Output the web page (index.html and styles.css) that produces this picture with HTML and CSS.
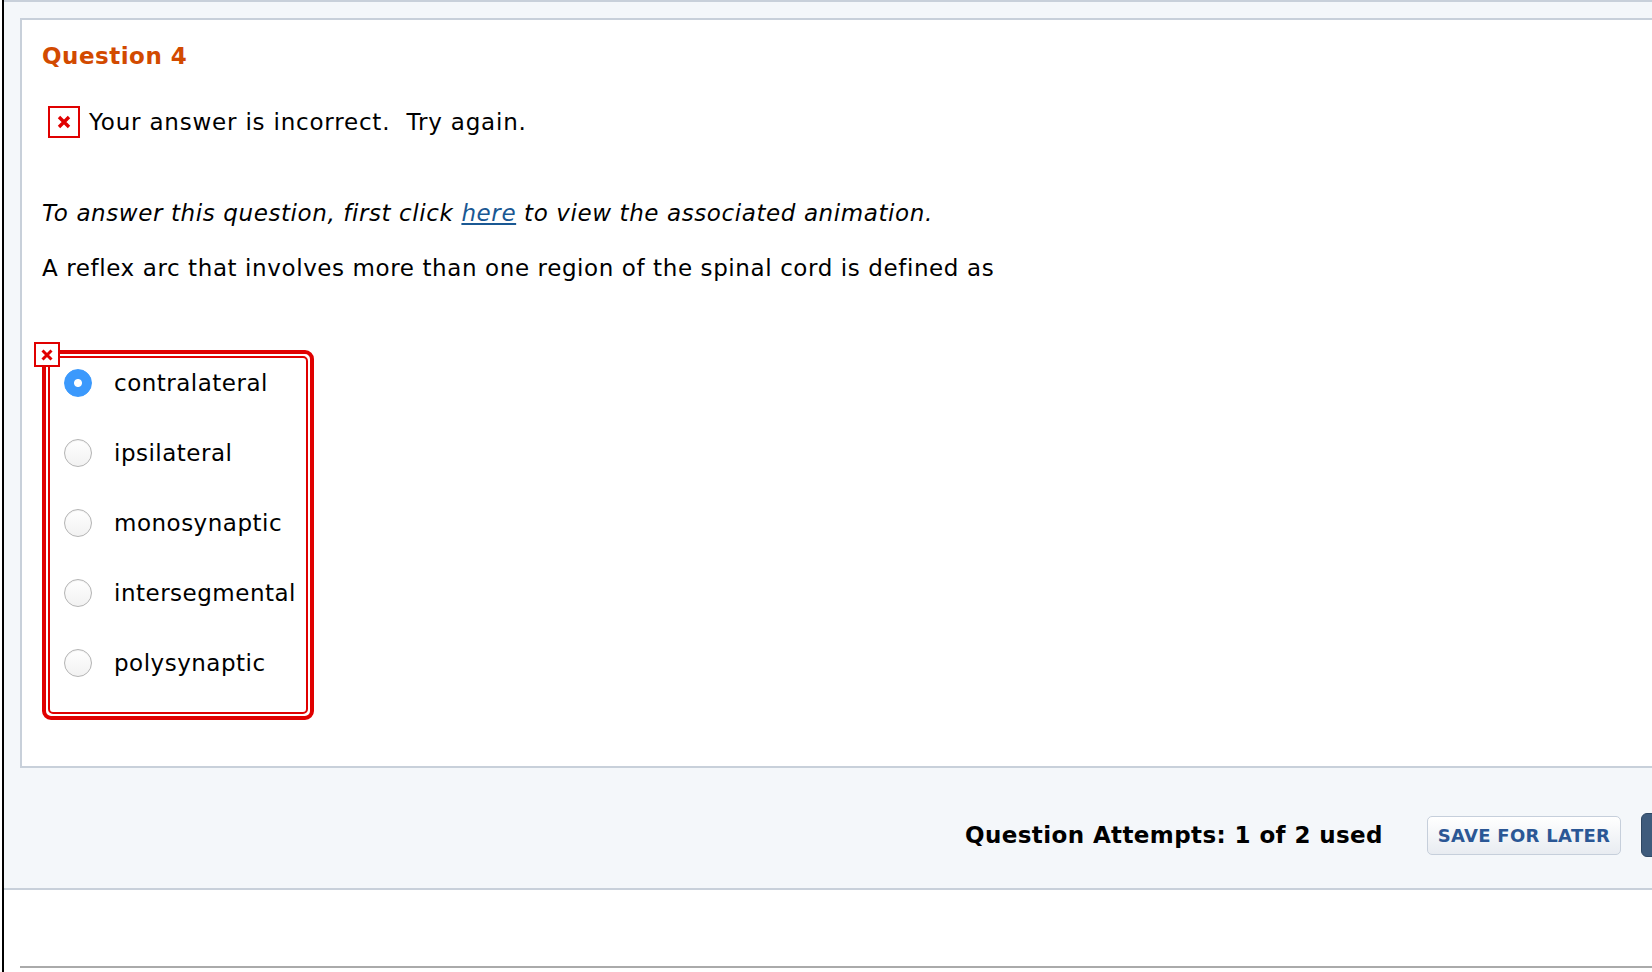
FILE: index.html
```html
<!doctype html>
<html lang="en-us">
  <head>
    <meta charset="utf-8">
    <title>Question 4</title>
    <link rel="stylesheet" href="styles.css">
  </head>
  <body>
    <div class="page">
      <div class="question-area">
        <div class="question-panel">
          <h2 class="question-title">Question 4</h2>

          <div class="feedback">
            <span class="x-box x-box-large">
              <svg width="14" height="14" viewBox="0 0 14 14"><path d="M2 2 L12 12 M12 2 L2 12" stroke="#e00000" stroke-width="3.4" fill="none"/></svg>
            </span>
            <span>Your answer is incorrect.&nbsp; Try again.</span>
          </div>

          <p class="instructions">To answer this question, first click <a href="#">here</a> to view the associated animation.</p>
          <p class="question-text">A reflex arc that involves more than one region of the spinal cord is defined as</p>

          <div class="choices">
            <span class="x-box x-box-small">
              <svg width="12" height="12" viewBox="0 0 12 12"><path d="M1.5 1.5 L10.5 10.5 M10.5 1.5 L1.5 10.5" stroke="#e00000" stroke-width="3" fill="none"/></svg>
            </span>
            <div class="choices-inner">
              <label class="choice"><input type="radio" name="q4" checked><span>contralateral</span></label>
              <label class="choice"><input type="radio" name="q4"><span>ipsilateral</span></label>
              <label class="choice"><input type="radio" name="q4"><span>monosynaptic</span></label>
              <label class="choice"><input type="radio" name="q4"><span>intersegmental</span></label>
              <label class="choice"><input type="radio" name="q4"><span>polysynaptic</span></label>
            </div>
          </div>
        </div>

        <div class="attempts-bar">
          <span class="attempts">Question Attempts: 1 of 2 used</span>
          <button class="btn btn-save" type="button">Save for Later</button>
          <button class="btn btn-submit" type="button" aria-label="Submit Answer"></button>
        </div>
      </div>

      <div class="page-bottom"></div>
    </div>
  </body>
</html>
```

FILE: styles.css
```css
body {
  margin: 0;
  font-family: "DejaVu Sans", Verdana, sans-serif;
  color: #000;
  background: #fff;
}

.page {
  margin-left: 2px;
  min-height: 972px;
  border-left: 2px solid #000;
  overflow: hidden;
}

.question-area {
  background: #f4f7fa;
  border-top: 2px solid #c8d0da;
  border-bottom: 2px solid #c8d0da;
  padding-top: 16px;
}

.question-panel {
  margin-left: 16px;
  background: #fff;
  border: 2px solid #c8d0da;
  border-right: 0;
  padding: 23px 0 46px 20px;
}

.question-title {
  margin: 0 0 37px 0;
  font-size: 23px;
  line-height: 26px;
  letter-spacing: 0.5px;
  font-weight: bold;
  color: #d24a00;
}

.feedback {
  display: flex;
  align-items: center;
  font-size: 23px;
  line-height: 26px;
  letter-spacing: 0.8px;
  margin-left: 6px;
}

.x-box {
  display: flex;
  align-items: center;
  justify-content: center;
  box-sizing: border-box;
  border: 2px solid #e00000;
  background: #fff;
}

.x-box-large {
  width: 32px;
  height: 32px;
  margin-right: 9px;
}

.x-box-small {
  position: absolute;
  left: -12px;
  top: -12px;
  width: 26px;
  height: 25px;
  z-index: 1;
}

.instructions {
  margin: 62px 0 0 0;
  font-size: 23px;
  line-height: 26px;
  letter-spacing: 0.6px;
  font-style: italic;
}

.instructions a {
  color: #1a5893;
}

.question-text {
  margin: 29px 0 0 0;
  font-size: 23px;
  line-height: 26px;
  letter-spacing: 0.6px;
}

.choices {
  position: relative;
  display: inline-block;
  margin-top: 69px;
  border: 4px solid #e00000;
  border-radius: 9px;
  padding: 2px;
  background: #fff;
}

.choices-inner {
  display: flex;
  flex-direction: column;
  gap: 30px;
  border: 2px solid #e00000;
  border-radius: 5px;
  padding: 5px 10px 29px 14px;
}

.choice {
  display: flex;
  align-items: center;
  height: 40px;
  font-size: 23px;
  line-height: 26px;
  letter-spacing: 0.5px;
}

.choice input {
  appearance: none;
  -webkit-appearance: none;
  width: 28px;
  height: 28px;
  margin: 0 22px 0 0;
  border: 1px solid #b4b4b4;
  border-radius: 50%;
  background: linear-gradient(#ffffff, #f2f2f2);
  box-shadow: inset 0 1px 1px rgba(0, 0, 0, 0.06);
}

.choice input:checked {
  border-color: #3b99fc;
  background: radial-gradient(circle, #fff 0, #fff 3.5px, #3b99fc 4.5px);
  box-shadow: none;
}

.attempts-bar {
  display: flex;
  align-items: center;
  white-space: nowrap;
  padding: 45px 0 31px 961px;
}

.attempts {
  font-size: 23px;
  letter-spacing: 0.4px;
  font-weight: bold;
}

.btn {
  font-family: "DejaVu Sans", Verdana, sans-serif;
  font-weight: bold;
  text-transform: uppercase;
  flex-shrink: 0;
}

.btn-save {
  margin-left: 44px;
  width: 194px;
  height: 39px;
  padding: 0;
  font-size: 18px;
  letter-spacing: 0.3px;
  color: #2b5795;
  border: 1px solid #c6cfdb;
  border-radius: 5px;
  background: linear-gradient(#ffffff, #e8ecf1);
}

.btn-submit {
  margin-left: 20px;
  width: 230px;
  height: 44px;
  border: 1px solid #2e4763;
  border-radius: 6px;
  background: #3e5b7c;
}

.page-bottom {
  margin-left: 16px;
  height: 76px;
  border-bottom: 2px solid #aaaaaa;
}
```
